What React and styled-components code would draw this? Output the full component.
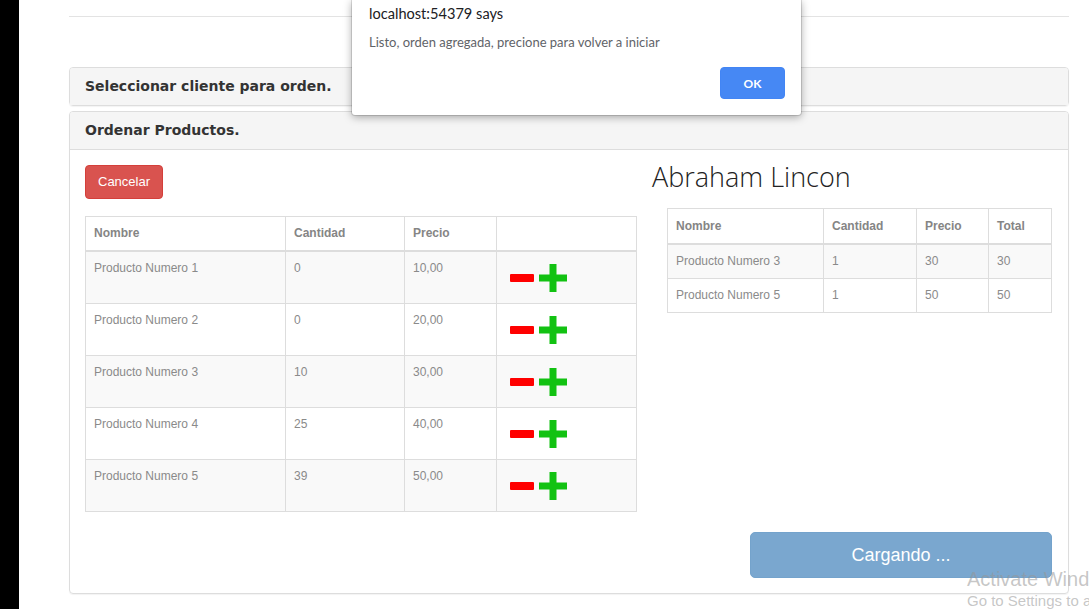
import React from 'react'
import styled, { createGlobalStyle } from 'styled-components'

const products = [
  { name: 'Producto Numero 1', qty: 0, price: '10,00' },
  { name: 'Producto Numero 2', qty: 0, price: '20,00' },
  { name: 'Producto Numero 3', qty: 10, price: '30,00' },
  { name: 'Producto Numero 4', qty: 25, price: '40,00' },
  { name: 'Producto Numero 5', qty: 39, price: '50,00' },
]

const order = [
  { name: 'Producto Numero 3', qty: 1, price: 30, total: 30 },
  { name: 'Producto Numero 5', qty: 1, price: 50, total: 50 },
]

export default function App() {
  return (
    <Screen>
      <GlobalStyle />
      <Edge />
      <Page>
        <Rule />
        <Panel>
          <PanelHeading>
            <PanelTitle>Seleccionar cliente para orden.</PanelTitle>
          </PanelHeading>
        </Panel>
        <Panel>
          <PanelHeading $open>
            <PanelTitle>Ordenar Productos.</PanelTitle>
          </PanelHeading>
          <PanelBody>
            <LeftColumn>
              <CancelButton>Cancelar</CancelButton>
              <Table>
                <colgroup>
                  <col style={{ width: 200 }} />
                  <col style={{ width: 119 }} />
                  <col style={{ width: 92 }} />
                  <col style={{ width: 140 }} />
                </colgroup>
                <thead>
                  <tr>
                    <Th>Nombre</Th>
                    <Th>Cantidad</Th>
                    <Th>Precio</Th>
                    <Th></Th>
                  </tr>
                </thead>
                <tbody>
                  {products.map((p, i) => (
                    <Row key={p.name} $striped={i % 2 === 0}>
                      <Td $tall>{p.name}</Td>
                      <Td $tall>{p.qty}</Td>
                      <Td $tall>{p.price}</Td>
                      <Td $tall>
                        <Controls>
                          <MinusIcon />
                          <PlusIcon />
                        </Controls>
                      </Td>
                    </Row>
                  ))}
                </tbody>
              </Table>
            </LeftColumn>
            <RightColumn>
              <ClientName>Abraham Lincon</ClientName>
              <SummaryTable>
                <colgroup>
                  <col style={{ width: 156 }} />
                  <col style={{ width: 93 }} />
                  <col style={{ width: 72 }} />
                  <col style={{ width: 63 }} />
                </colgroup>
                <thead>
                  <tr>
                    <Th $pad={9}>Nombre</Th>
                    <Th $pad={9}>Cantidad</Th>
                    <Th $pad={9}>Precio</Th>
                    <Th $pad={9}>Total</Th>
                  </tr>
                </thead>
                <tbody>
                  {order.map((o, i) => (
                    <Row key={o.name} $striped={i % 2 === 0}>
                      <Td>{o.name}</Td>
                      <Td>{o.qty}</Td>
                      <Td>{o.price}</Td>
                      <Td>{o.total}</Td>
                    </Row>
                  ))}
                </tbody>
              </SummaryTable>
            </RightColumn>
            <LoadingButton disabled>Cargando ...</LoadingButton>
          </PanelBody>
        </Panel>
      </Page>

      <Dialog>
        <DialogTitle>localhost:54379 says</DialogTitle>
        <DialogMessage>Listo, orden agregada, precione para volver a iniciar</DialogMessage>
        <DialogActions>
          <OkButton>OK</OkButton>
        </DialogActions>
      </Dialog>

      <Watermark>
        <WatermarkTitle>Activate Windows</WatermarkTitle>
        <WatermarkText>Go to Settings to activate Windows.</WatermarkText>
      </Watermark>
    </Screen>
  )
}

function MinusIcon() {
  return (
    <svg width='24' height='8' viewBox='0 0 24 8'>
      <rect x='0' y='0' width='24' height='8' rx='1' fill='#ff0000' />
    </svg>
  )
}

function PlusIcon() {
  return (
    <svg width='30' height='30' viewBox='0 0 30 30'>
      <path d='M11.5 1h7v10.5H29v7H18.5V29h-7V18.5H1v-7h10.5z' fill='#12c212' />
    </svg>
  )
}

const GlobalStyle = createGlobalStyle`
  html, body {
    margin: 0;
    padding: 0;
    background: #fff;
  }
  body {
    font-family: 'Liberation Sans', Arial, sans-serif;
    font-size: 14px;
    color: #333;
    overflow: hidden;
  }
`
const Screen = styled.div`
  position: relative;
  display: flex;
  width: 1089px;
  height: 609px;
  overflow: hidden;
`
const Edge = styled.div`
  width: 19px;
  flex-shrink: 0;
  background: #000;
`
const Page = styled.div`
  flex: 1;
  padding: 16px 0 0 50px;
`
const Rule = styled.hr`
  width: 1000px;
  margin: 0 0 50px;
  border: 0;
  border-top: 1px solid #e3e3e3;
`
const Panel = styled.section`
  width: 1000px;
  box-sizing: border-box;
  border: 1px solid #ddd;
  border-radius: 4px;
  box-shadow: 0 1px 1px rgba(0, 0, 0, 0.05);
  & + & {
    margin-top: 5px;
  }
`
const PanelHeading = styled.div`
  background: #f5f5f5;
  padding: 10px 15px;
  border-radius: 3px 3px 0 0;
  border-bottom: ${(p) => (p.$open ? '1px solid #ddd' : '0')};
`
const PanelTitle = styled.h4`
  margin: 0;
  font-family: 'DejaVu Sans', Verdana, sans-serif;
  font-size: 14px;
  font-weight: bold;
  line-height: 17px;
  color: #333;
`
const PanelBody = styled.div`
  display: grid;
  grid-template-columns: 551px 1fr;
  column-gap: 16px;
  padding: 15px;
`
const LeftColumn = styled.div`
  display: flex;
  flex-direction: column;
  align-items: flex-start;
`
const RightColumn = styled.div`
  display: flex;
  flex-direction: column;
`
const CancelButton = styled.button`
  font-family: 'Liberation Sans', Arial, sans-serif;
  font-size: 13px;
  line-height: 20px;
  padding: 6px 12px;
  color: #fff;
  background: #d9534f;
  border: 1px solid #d43f3a;
  border-radius: 4px;
`
const Table = styled.table`
  width: 552px;
  margin-top: 17px;
  border-collapse: collapse;
  table-layout: fixed;
  border: 1px solid #ddd;
  font-size: 12px;
`
const SummaryTable = styled(Table)`
  width: 385px;
  margin: 19px 0 0 15px;
`
const Th = styled.th`
  text-align: left;
  padding: ${(p) => p.$pad ?? 8}px 8px 8px;
  line-height: 17px;
  font-weight: bold;
  color: #858585;
  border: 1px solid #ddd;
  border-bottom: 2px solid #ddd;
  vertical-align: bottom;
`
const Row = styled.tr`
  background: ${(p) => (p.$striped ? '#f9f9f9' : '#fff')};
`
const Td = styled.td`
  padding: 8px;
  line-height: 17px;
  height: ${(p) => (p.$tall ? '35px' : '17px')};
  color: #8a8a8a;
  border: 1px solid #ddd;
  vertical-align: top;
`
const Controls = styled.div`
  display: flex;
  align-items: center;
  gap: 4px;
  margin: 3px 0 0 5px;
`
const ClientName = styled.h2`
  margin: 0;
  font-family: 'Open Sans', 'Liberation Sans', sans-serif;
  font-weight: 300;
  font-size: 27px;
  line-height: 24px;
  color: #222;
`
const LoadingButton = styled.button`
  grid-column: 1 / -1;
  justify-self: end;
  width: 302px;
  height: 46px;
  margin: 20px 1px 0 0;
  font-family: 'Liberation Sans', Arial, sans-serif;
  font-size: 18px;
  color: #fff;
  background: #7aa7cf;
  border: 1px solid #74a3cc;
  border-radius: 5px;
`
const Dialog = styled.div`
  position: absolute;
  top: 0;
  left: 352px;
  width: 449px;
  height: 115px;
  box-sizing: border-box;
  padding: 4px 16px 0 17px;
  background: #fff;
  border-radius: 0 0 3px 3px;
  box-shadow: 0 2px 8px rgba(0, 0, 0, 0.35), 0 0 0 1px rgba(0, 0, 0, 0.12);
  font-family: Lato, 'Liberation Sans', sans-serif;
`
const DialogTitle = styled.div`
  font-size: 14.6px;
  line-height: 20px;
  color: #202124;
`
const DialogMessage = styled.div`
  margin-top: 10px;
  font-size: 13px;
  line-height: 17px;
  color: #5f6368;
`
const DialogActions = styled.div`
  display: flex;
  justify-content: flex-end;
  margin-top: 16px;
`
const OkButton = styled.button`
  width: 65px;
  height: 32px;
  font-family: Lato, 'Liberation Sans', sans-serif;
  font-size: 12px;
  font-weight: bold;
  color: #fff;
  background: #4688f4;
  border: 1px solid #4285f4;
  border-radius: 4px;
`
const Watermark = styled.div`
  position: absolute;
  left: 967px;
  top: 567px;
  white-space: nowrap;
  font-family: 'Liberation Sans', Arial, sans-serif;
  color: rgba(150, 150, 150, 0.55);
`
const WatermarkTitle = styled.div`
  font-size: 20px;
  line-height: 25px;
`
const WatermarkText = styled.div`
  font-size: 15px;
  line-height: 18px;
`
